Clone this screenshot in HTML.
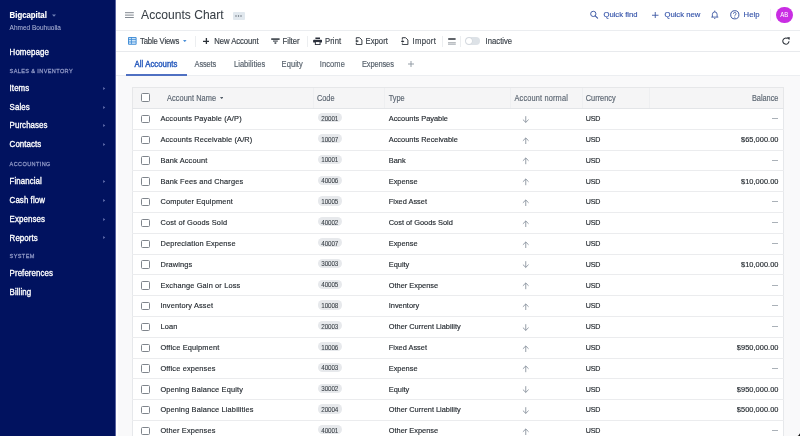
<!DOCTYPE html>
<html><head><meta charset="utf-8"><style>
html,body{margin:0;padding:0;width:800px;height:436px;overflow:hidden;background:#f9f9fa}
svg{display:block}
#tx{position:absolute;left:0;top:0;will-change:transform}
#tx text{font-family:'Liberation Sans', sans-serif}
</style></head><body>
<div style="position:absolute;left:0.00px;top:0.00px;width:115.00px;height:436.00px;background:#01125f"></div>
<div style="position:absolute;left:115.00px;top:0.00px;width:1.00px;height:436.00px;background:#5a64a0"></div>
<svg style="position:absolute;left:51.50px;top:13.50px" width="4" height="3" viewBox="0 0 4 3"><path d="M0 0.5h4L2 2.8z" fill="#6f7fb5"/></svg>
<svg style="position:absolute;left:101.50px;top:85.80px" width="4" height="5" viewBox="0 0 4 5"><path d="M1.2 1L3.2 2.5L1.2 4z" fill="#6673b0"/></svg>
<svg style="position:absolute;left:101.50px;top:104.60px" width="4" height="5" viewBox="0 0 4 5"><path d="M1.2 1L3.2 2.5L1.2 4z" fill="#6673b0"/></svg>
<svg style="position:absolute;left:101.50px;top:123.00px" width="4" height="5" viewBox="0 0 4 5"><path d="M1.2 1L3.2 2.5L1.2 4z" fill="#6673b0"/></svg>
<svg style="position:absolute;left:101.50px;top:141.50px" width="4" height="5" viewBox="0 0 4 5"><path d="M1.2 1L3.2 2.5L1.2 4z" fill="#6673b0"/></svg>
<svg style="position:absolute;left:101.50px;top:179.20px" width="4" height="5" viewBox="0 0 4 5"><path d="M1.2 1L3.2 2.5L1.2 4z" fill="#6673b0"/></svg>
<svg style="position:absolute;left:101.50px;top:197.80px" width="4" height="5" viewBox="0 0 4 5"><path d="M1.2 1L3.2 2.5L1.2 4z" fill="#6673b0"/></svg>
<svg style="position:absolute;left:101.50px;top:216.50px" width="4" height="5" viewBox="0 0 4 5"><path d="M1.2 1L3.2 2.5L1.2 4z" fill="#6673b0"/></svg>
<svg style="position:absolute;left:101.50px;top:235.30px" width="4" height="5" viewBox="0 0 4 5"><path d="M1.2 1L3.2 2.5L1.2 4z" fill="#6673b0"/></svg>
<div style="position:absolute;left:116.00px;top:0.00px;width:684.00px;height:436.00px;background:#f9f9fa"></div>
<div style="position:absolute;left:116.00px;top:0.00px;width:2.00px;height:436.00px;background:#fff"></div>
<div style="position:absolute;left:116.00px;top:0.00px;width:684.60px;height:29.80px;background:#fff"></div>
<div style="position:absolute;left:116.00px;top:29.80px;width:684.60px;height:1.00px;background:#ebedf0"></div>
<svg style="position:absolute;left:125.00px;top:12.00px" width="9" height="7" viewBox="0 0 9 7"><path d="M0 0.7h8.8M0 3.1h8.8M0 5.5h8.8" stroke="#6a727c" stroke-width="0.85"/></svg>
<div style="position:absolute;left:232.60px;top:11.60px;width:12.30px;height:8.40px;background:#e1e8ee;border-radius:1px"></div>
<svg style="position:absolute;left:235.40px;top:15.00px" width="7" height="2" viewBox="0 0 7 2"><circle cx="1" cy="1" r="0.7" fill="#56606b"/><circle cx="3.5" cy="1" r="0.7" fill="#56606b"/><circle cx="6" cy="1" r="0.7" fill="#56606b"/></svg>
<svg style="position:absolute;left:589.00px;top:10.00px" width="10" height="10" viewBox="0 0 10 10"><circle cx="4.3" cy="3.9" r="2.65" stroke="#3d58a3" stroke-width="0.95" fill="none"/><path d="M6.2 5.8L8.6 8.2" stroke="#3d58a3" stroke-width="1.1" stroke-linecap="round"/></svg>
<svg style="position:absolute;left:652.00px;top:11.60px" width="6.5" height="6.5" viewBox="0 0 6.5 6.5"><path d="M3.25 0v6.5M0 3.25h6.5" stroke="#3d58a3" stroke-width="0.9"/></svg>
<svg style="position:absolute;left:711.00px;top:10.20px" width="7.6" height="9.5" viewBox="0 0 7.6 9.5"><path d="M0.3 7.1h7M1.4 7.1V4.3a2.35 2.35 0 0 1 4.7 0V7.1M3.75 1.9V0.6M3.2 8.5h1.1" stroke="#3d58a3" stroke-width="0.9" fill="none"/></svg>
<svg style="position:absolute;left:730.00px;top:10.30px" width="9.6" height="9.6" viewBox="0 0 9.6 9.6"><circle cx="4.8" cy="4.8" r="4.1" stroke="#3d58a3" stroke-width="1" fill="none"/><path d="M3.5 3.7a1.3 1.3 0 1 1 1.8 1.2c-.4.2-.5.5-.5.9" stroke="#3d58a3" stroke-width="0.9" fill="none"/><circle cx="4.8" cy="7.1" r="0.55" fill="#3d58a3"/></svg>
<div style="position:absolute;left:769.50px;top:9.00px;width:0.50px;height:12.00px;background:#f2f3f5"></div>
<div style="position:absolute;left:776.00px;top:6.80px;width:16.60px;height:16.40px;background:#c92de3;border-radius:50%"></div>
<div style="position:absolute;left:116.00px;top:30.80px;width:684.60px;height:20.20px;background:#fff"></div>
<div style="position:absolute;left:116.00px;top:51.00px;width:684.00px;height:1.20px;background:#e8eaed"></div>
<svg style="position:absolute;left:128.00px;top:37.00px" width="8.6" height="7.75" viewBox="0 0 8.6 7.75"><rect x="0" y="0" width="8.6" height="7.75" rx="0.9" fill="#3c8ad5"/><rect x="0.9" y="0.9" width="2.05" height="1.05" fill="#cfe6fa"/><rect x="3.75" y="0.9" width="3.90" height="1.05" fill="#cfe6fa"/><rect x="0.9" y="2.75" width="2.05" height="1.80" fill="#cfe6fa"/><rect x="3.75" y="2.75" width="3.90" height="1.80" fill="#cfe6fa"/><rect x="0.9" y="5.35" width="2.05" height="1.50" fill="#cfe6fa"/><rect x="3.75" y="5.35" width="3.90" height="1.50" fill="#cfe6fa"/></svg>
<svg style="position:absolute;left:183.00px;top:40.00px" width="3.6" height="2.2" viewBox="0 0 3.6 2.2"><path d="M0 0h3.6L1.8 2.2z" fill="#4a8fd8"/></svg>
<div style="position:absolute;left:195.20px;top:35.50px;width:0.60px;height:11.50px;background:#eceef0"></div>
<svg style="position:absolute;left:202.70px;top:37.60px" width="6.8" height="6.6" viewBox="0 0 6.8 6.6"><path d="M3.4 0v6.6M0 3.3h6.8" stroke="#2b3138" stroke-width="1.3"/></svg>
<svg style="position:absolute;left:271.00px;top:37.70px" width="9" height="6.5" viewBox="0 0 9 6.5"><path d="M0.2 0.3H8.6V1.9H0.2z" fill="#394047"/><path d="M2 2.5H6.8V3.7H2z" fill="#4a5158"/><path d="M3.5 4.2H5.3V5.9H3.5z" fill="#4a5158"/></svg>
<div style="position:absolute;left:306.50px;top:35.50px;width:0.60px;height:11.50px;background:#eceef0"></div>
<svg style="position:absolute;left:313.00px;top:37.00px" width="9.2" height="8.2" viewBox="0 0 9.2 8.2"><rect x="2.4" y="0.5" width="4.6" height="1.5" fill="#2a2f3a"/><rect x="0.1" y="2.7" width="9" height="2.9" rx="0.9" fill="#2a2f3a"/><rect x="2.35" y="4.6" width="4.7" height="3" fill="#fff" stroke="#2a2f3a" stroke-width="0.95"/></svg>
<svg style="position:absolute;left:354.80px;top:36.80px" width="8" height="8.2" viewBox="0 0 8 8.2"><path d="M1.3 2.6V0.7H4.6L6.9 3V7.6H1.3V5.7" stroke="#2b3138" stroke-width="0.95" fill="none" stroke-linejoin="round"/><path d="M0.2 4.1L2.2 2.7V3.5H3.4V4.8H2.2V5.6z" fill="#2b3138"/></svg>
<svg style="position:absolute;left:401.40px;top:36.80px" width="8" height="8.2" viewBox="0 0 8 8.2"><path d="M1.3 2.6V0.7H4.6L6.9 3V7.6H1.3V6.4" stroke="#2b3138" stroke-width="0.95" fill="none" stroke-linejoin="round"/><path d="M3.4 4.4L1.4 5.8V5H0.2V3.7H1.4V2.9z" fill="#2b3138"/></svg>
<div style="position:absolute;left:442.30px;top:35.50px;width:0.60px;height:11.50px;background:#eceef0"></div>
<svg style="position:absolute;left:448.00px;top:37.50px" width="7.8" height="7.5" viewBox="0 0 7.8 7.5"><path d="M0.2 1h7.4" stroke="#2b3138" stroke-width="1.5"/><path d="M0 4.9h7.8" stroke="#707880" stroke-width="0.8"/><path d="M0 6.6h7.8" stroke="#9aa1a8" stroke-width="0.7"/></svg>
<div style="position:absolute;left:459.80px;top:35.50px;width:0.60px;height:11.50px;background:#eceef0"></div>
<div style="position:absolute;left:465.30px;top:37.20px;width:14.80px;height:7.40px;background:#dde2e7;border-radius:4px"></div>
<div style="position:absolute;left:465.90px;top:37.80px;width:6.20px;height:6.20px;background:#fff;border-radius:50%;box-shadow:0 0 0 0.4px #c9ced4"></div>
<svg style="position:absolute;left:781.50px;top:37.00px" width="8" height="8" viewBox="0 0 8 8"><path d="M7.0 4.3A3.1 3.1 0 1 1 5.6 1.5" stroke="#2b3138" stroke-width="1.05" fill="none"/><path d="M4.9 0.2L7.9 0.3L7.3 3.2z" fill="#2b3138"/></svg>
<div style="position:absolute;left:116.00px;top:52.20px;width:684.00px;height:23.60px;background:#fff"></div>
<div style="position:absolute;left:116.00px;top:75.40px;width:684.00px;height:1.00px;background:#eceef1"></div>
<div style="position:absolute;left:126.00px;top:74.00px;width:60.60px;height:1.80px;background:#4f70c2"></div>
<svg style="position:absolute;left:408.40px;top:61.10px" width="6" height="6" viewBox="0 0 6 6"><path d="M3 0v6M0 3h6" stroke="#8a949e" stroke-width="0.9"/></svg>
<div style="position:absolute;left:132.20px;top:87.00px;width:651.40px;height:349.00px;background:#fff;border-left:0.8px solid #e6e8eb;border-right:0.8px solid #e6e8eb;box-sizing:border-box"></div>
<div style="position:absolute;left:132.20px;top:87.00px;width:651.40px;height:21.50px;background:#f5f5f6;border:0.8px solid #e6e7e9;box-sizing:border-box"></div>
<div style="position:absolute;left:312.50px;top:87.50px;width:0.80px;height:21.00px;background:#eeeff1"></div>
<div style="position:absolute;left:383.80px;top:87.50px;width:0.80px;height:21.00px;background:#eeeff1"></div>
<div style="position:absolute;left:510.00px;top:87.50px;width:0.80px;height:21.00px;background:#eeeff1"></div>
<div style="position:absolute;left:582.00px;top:87.50px;width:0.80px;height:21.00px;background:#eeeff1"></div>
<div style="position:absolute;left:648.60px;top:87.50px;width:0.80px;height:21.00px;background:#eeeff1"></div>
<div style="position:absolute;left:132.20px;top:108.20px;width:651.40px;height:0.90px;background:#e3e5e8"></div>
<div style="position:absolute;left:141.10px;top:93.10px;width:8.60px;height:8.60px;border:0.9px solid #7f858c;border-radius:1.5px;background:#fff;box-sizing:border-box"></div>
<svg style="position:absolute;left:220.00px;top:96.80px" width="3.4" height="2.4" viewBox="0 0 3.4 2.4"><path d="M0 0h3.4L1.7 2.2z" fill="#56606b"/></svg>
<div style="position:absolute;left:132.20px;top:128.85px;width:651.40px;height:0.90px;background:#ebecee"></div>
<div style="position:absolute;left:141.10px;top:114.70px;width:8.60px;height:8.60px;border:0.9px solid #7f858c;border-radius:1.5px;background:#fff;box-sizing:border-box"></div>
<div style="position:absolute;left:318.00px;top:113.20px;width:24.00px;height:9.20px;background:#e7e9ec;border-radius:4.6px"></div>
<svg style="position:absolute;left:522.00px;top:115.70px" width="7.5" height="7.5" viewBox="0 0 7.5 7.5"><path d="M3.75 0.2V6.4M0.9 3.6L3.75 6.4L6.6 3.6" stroke="#7c8793" stroke-width="0.8" fill="none"/></svg>
<div style="position:absolute;left:771.60px;top:118.10px;width:6.80px;height:0.80px;background:#aab1b8"></div>
<div style="position:absolute;left:132.20px;top:149.65px;width:651.40px;height:0.90px;background:#ebecee"></div>
<div style="position:absolute;left:141.10px;top:135.50px;width:8.60px;height:8.60px;border:0.9px solid #7f858c;border-radius:1.5px;background:#fff;box-sizing:border-box"></div>
<div style="position:absolute;left:318.00px;top:134.00px;width:24.00px;height:9.20px;background:#e7e9ec;border-radius:4.6px"></div>
<svg style="position:absolute;left:522.00px;top:136.50px" width="7.5" height="7.5" viewBox="0 0 7.5 7.5"><path d="M3.75 7.2V1M0.9 3.8L3.75 1L6.6 3.8" stroke="#7c8793" stroke-width="0.8" fill="none"/></svg>
<div style="position:absolute;left:132.20px;top:170.45px;width:651.40px;height:0.90px;background:#ebecee"></div>
<div style="position:absolute;left:141.10px;top:156.30px;width:8.60px;height:8.60px;border:0.9px solid #7f858c;border-radius:1.5px;background:#fff;box-sizing:border-box"></div>
<div style="position:absolute;left:318.00px;top:154.80px;width:24.00px;height:9.20px;background:#e7e9ec;border-radius:4.6px"></div>
<svg style="position:absolute;left:522.00px;top:157.30px" width="7.5" height="7.5" viewBox="0 0 7.5 7.5"><path d="M3.75 7.2V1M0.9 3.8L3.75 1L6.6 3.8" stroke="#7c8793" stroke-width="0.8" fill="none"/></svg>
<div style="position:absolute;left:771.60px;top:159.70px;width:6.80px;height:0.80px;background:#aab1b8"></div>
<div style="position:absolute;left:132.20px;top:191.25px;width:651.40px;height:0.90px;background:#ebecee"></div>
<div style="position:absolute;left:141.10px;top:177.10px;width:8.60px;height:8.60px;border:0.9px solid #7f858c;border-radius:1.5px;background:#fff;box-sizing:border-box"></div>
<div style="position:absolute;left:318.00px;top:175.60px;width:24.00px;height:9.20px;background:#e7e9ec;border-radius:4.6px"></div>
<svg style="position:absolute;left:522.00px;top:178.10px" width="7.5" height="7.5" viewBox="0 0 7.5 7.5"><path d="M3.75 7.2V1M0.9 3.8L3.75 1L6.6 3.8" stroke="#7c8793" stroke-width="0.8" fill="none"/></svg>
<div style="position:absolute;left:132.20px;top:212.05px;width:651.40px;height:0.90px;background:#ebecee"></div>
<div style="position:absolute;left:141.10px;top:197.90px;width:8.60px;height:8.60px;border:0.9px solid #7f858c;border-radius:1.5px;background:#fff;box-sizing:border-box"></div>
<div style="position:absolute;left:318.00px;top:196.40px;width:24.00px;height:9.20px;background:#e7e9ec;border-radius:4.6px"></div>
<svg style="position:absolute;left:522.00px;top:198.90px" width="7.5" height="7.5" viewBox="0 0 7.5 7.5"><path d="M3.75 7.2V1M0.9 3.8L3.75 1L6.6 3.8" stroke="#7c8793" stroke-width="0.8" fill="none"/></svg>
<div style="position:absolute;left:771.60px;top:201.30px;width:6.80px;height:0.80px;background:#aab1b8"></div>
<div style="position:absolute;left:132.20px;top:232.85px;width:651.40px;height:0.90px;background:#ebecee"></div>
<div style="position:absolute;left:141.10px;top:218.70px;width:8.60px;height:8.60px;border:0.9px solid #7f858c;border-radius:1.5px;background:#fff;box-sizing:border-box"></div>
<div style="position:absolute;left:318.00px;top:217.20px;width:24.00px;height:9.20px;background:#e7e9ec;border-radius:4.6px"></div>
<svg style="position:absolute;left:522.00px;top:219.70px" width="7.5" height="7.5" viewBox="0 0 7.5 7.5"><path d="M3.75 7.2V1M0.9 3.8L3.75 1L6.6 3.8" stroke="#7c8793" stroke-width="0.8" fill="none"/></svg>
<div style="position:absolute;left:771.60px;top:222.10px;width:6.80px;height:0.80px;background:#aab1b8"></div>
<div style="position:absolute;left:132.20px;top:253.65px;width:651.40px;height:0.90px;background:#ebecee"></div>
<div style="position:absolute;left:141.10px;top:239.50px;width:8.60px;height:8.60px;border:0.9px solid #7f858c;border-radius:1.5px;background:#fff;box-sizing:border-box"></div>
<div style="position:absolute;left:318.00px;top:238.00px;width:24.00px;height:9.20px;background:#e7e9ec;border-radius:4.6px"></div>
<svg style="position:absolute;left:522.00px;top:240.50px" width="7.5" height="7.5" viewBox="0 0 7.5 7.5"><path d="M3.75 7.2V1M0.9 3.8L3.75 1L6.6 3.8" stroke="#7c8793" stroke-width="0.8" fill="none"/></svg>
<div style="position:absolute;left:771.60px;top:242.90px;width:6.80px;height:0.80px;background:#aab1b8"></div>
<div style="position:absolute;left:132.20px;top:274.45px;width:651.40px;height:0.90px;background:#ebecee"></div>
<div style="position:absolute;left:141.10px;top:260.30px;width:8.60px;height:8.60px;border:0.9px solid #7f858c;border-radius:1.5px;background:#fff;box-sizing:border-box"></div>
<div style="position:absolute;left:318.00px;top:258.80px;width:24.00px;height:9.20px;background:#e7e9ec;border-radius:4.6px"></div>
<svg style="position:absolute;left:522.00px;top:261.30px" width="7.5" height="7.5" viewBox="0 0 7.5 7.5"><path d="M3.75 0.2V6.4M0.9 3.6L3.75 6.4L6.6 3.6" stroke="#7c8793" stroke-width="0.8" fill="none"/></svg>
<div style="position:absolute;left:132.20px;top:295.25px;width:651.40px;height:0.90px;background:#ebecee"></div>
<div style="position:absolute;left:141.10px;top:281.10px;width:8.60px;height:8.60px;border:0.9px solid #7f858c;border-radius:1.5px;background:#fff;box-sizing:border-box"></div>
<div style="position:absolute;left:318.00px;top:279.60px;width:24.00px;height:9.20px;background:#e7e9ec;border-radius:4.6px"></div>
<svg style="position:absolute;left:522.00px;top:282.10px" width="7.5" height="7.5" viewBox="0 0 7.5 7.5"><path d="M3.75 7.2V1M0.9 3.8L3.75 1L6.6 3.8" stroke="#7c8793" stroke-width="0.8" fill="none"/></svg>
<div style="position:absolute;left:771.60px;top:284.50px;width:6.80px;height:0.80px;background:#aab1b8"></div>
<div style="position:absolute;left:132.20px;top:316.05px;width:651.40px;height:0.90px;background:#ebecee"></div>
<div style="position:absolute;left:141.10px;top:301.90px;width:8.60px;height:8.60px;border:0.9px solid #7f858c;border-radius:1.5px;background:#fff;box-sizing:border-box"></div>
<div style="position:absolute;left:318.00px;top:300.40px;width:24.00px;height:9.20px;background:#e7e9ec;border-radius:4.6px"></div>
<svg style="position:absolute;left:522.00px;top:302.90px" width="7.5" height="7.5" viewBox="0 0 7.5 7.5"><path d="M3.75 7.2V1M0.9 3.8L3.75 1L6.6 3.8" stroke="#7c8793" stroke-width="0.8" fill="none"/></svg>
<div style="position:absolute;left:771.60px;top:305.30px;width:6.80px;height:0.80px;background:#aab1b8"></div>
<div style="position:absolute;left:132.20px;top:336.85px;width:651.40px;height:0.90px;background:#ebecee"></div>
<div style="position:absolute;left:141.10px;top:322.70px;width:8.60px;height:8.60px;border:0.9px solid #7f858c;border-radius:1.5px;background:#fff;box-sizing:border-box"></div>
<div style="position:absolute;left:318.00px;top:321.20px;width:24.00px;height:9.20px;background:#e7e9ec;border-radius:4.6px"></div>
<svg style="position:absolute;left:522.00px;top:323.70px" width="7.5" height="7.5" viewBox="0 0 7.5 7.5"><path d="M3.75 0.2V6.4M0.9 3.6L3.75 6.4L6.6 3.6" stroke="#7c8793" stroke-width="0.8" fill="none"/></svg>
<div style="position:absolute;left:771.60px;top:326.10px;width:6.80px;height:0.80px;background:#aab1b8"></div>
<div style="position:absolute;left:132.20px;top:357.65px;width:651.40px;height:0.90px;background:#ebecee"></div>
<div style="position:absolute;left:141.10px;top:343.50px;width:8.60px;height:8.60px;border:0.9px solid #7f858c;border-radius:1.5px;background:#fff;box-sizing:border-box"></div>
<div style="position:absolute;left:318.00px;top:342.00px;width:24.00px;height:9.20px;background:#e7e9ec;border-radius:4.6px"></div>
<svg style="position:absolute;left:522.00px;top:344.50px" width="7.5" height="7.5" viewBox="0 0 7.5 7.5"><path d="M3.75 7.2V1M0.9 3.8L3.75 1L6.6 3.8" stroke="#7c8793" stroke-width="0.8" fill="none"/></svg>
<div style="position:absolute;left:132.20px;top:378.45px;width:651.40px;height:0.90px;background:#ebecee"></div>
<div style="position:absolute;left:141.10px;top:364.30px;width:8.60px;height:8.60px;border:0.9px solid #7f858c;border-radius:1.5px;background:#fff;box-sizing:border-box"></div>
<div style="position:absolute;left:318.00px;top:362.80px;width:24.00px;height:9.20px;background:#e7e9ec;border-radius:4.6px"></div>
<svg style="position:absolute;left:522.00px;top:365.30px" width="7.5" height="7.5" viewBox="0 0 7.5 7.5"><path d="M3.75 7.2V1M0.9 3.8L3.75 1L6.6 3.8" stroke="#7c8793" stroke-width="0.8" fill="none"/></svg>
<div style="position:absolute;left:771.60px;top:367.70px;width:6.80px;height:0.80px;background:#aab1b8"></div>
<div style="position:absolute;left:132.20px;top:399.25px;width:651.40px;height:0.90px;background:#ebecee"></div>
<div style="position:absolute;left:141.10px;top:385.10px;width:8.60px;height:8.60px;border:0.9px solid #7f858c;border-radius:1.5px;background:#fff;box-sizing:border-box"></div>
<div style="position:absolute;left:318.00px;top:383.60px;width:24.00px;height:9.20px;background:#e7e9ec;border-radius:4.6px"></div>
<svg style="position:absolute;left:522.00px;top:386.10px" width="7.5" height="7.5" viewBox="0 0 7.5 7.5"><path d="M3.75 0.2V6.4M0.9 3.6L3.75 6.4L6.6 3.6" stroke="#7c8793" stroke-width="0.8" fill="none"/></svg>
<div style="position:absolute;left:132.20px;top:420.05px;width:651.40px;height:0.90px;background:#ebecee"></div>
<div style="position:absolute;left:141.10px;top:405.90px;width:8.60px;height:8.60px;border:0.9px solid #7f858c;border-radius:1.5px;background:#fff;box-sizing:border-box"></div>
<div style="position:absolute;left:318.00px;top:404.40px;width:24.00px;height:9.20px;background:#e7e9ec;border-radius:4.6px"></div>
<svg style="position:absolute;left:522.00px;top:406.90px" width="7.5" height="7.5" viewBox="0 0 7.5 7.5"><path d="M3.75 0.2V6.4M0.9 3.6L3.75 6.4L6.6 3.6" stroke="#7c8793" stroke-width="0.8" fill="none"/></svg>
<div style="position:absolute;left:141.10px;top:426.70px;width:8.60px;height:8.60px;border:0.9px solid #7f858c;border-radius:1.5px;background:#fff;box-sizing:border-box"></div>
<div style="position:absolute;left:318.00px;top:425.20px;width:24.00px;height:9.20px;background:#e7e9ec;border-radius:4.6px"></div>
<svg style="position:absolute;left:522.00px;top:427.70px" width="7.5" height="7.5" viewBox="0 0 7.5 7.5"><path d="M3.75 7.2V1M0.9 3.8L3.75 1L6.6 3.8" stroke="#7c8793" stroke-width="0.8" fill="none"/></svg>
<div style="position:absolute;left:771.60px;top:430.10px;width:6.80px;height:0.80px;background:#aab1b8"></div>
<svg style="position:absolute;left:794.50px;top:430.50px" width="5.5" height="5.5" viewBox="0 0 5.5 5.5"><path d="M5.5 0V5.5H0A5.5 5.5 0 0 0 5.5 0z" fill="#111"/></svg>
<svg id="tx" width="800" height="436" viewBox="0 0 800 436">
<text transform="translate(9.60 17.90) scale(1 1.1)" font-size="7.80" fill="#fff" stroke="#fff" stroke-width="0.15" font-weight="700" style="">Bigcapital</text>
<text transform="translate(9.60 29.60) scale(1 1.1)" font-size="6.50" fill="#aeb6d8" stroke="#aeb6d8" stroke-width="0.05" font-weight="400" style="">Ahmed Bouhuolia</text>
<text transform="translate(9.60 54.60) scale(1 1.1)" font-size="7.90" fill="#ffffff" stroke="#ffffff" stroke-width="0.3" font-weight="400" style="letter-spacing:0.08px;">Homepage</text>
<text transform="translate(9.60 72.80) scale(1 1.1)" font-size="5.60" fill="#8c95c4" stroke="#8c95c4" stroke-width="0.25" font-weight="400" style="letter-spacing:0.36px;">SALES &amp; INVENTORY</text>
<text transform="translate(9.60 91.00) scale(1 1.1)" font-size="7.90" fill="#ffffff" stroke="#ffffff" stroke-width="0.3" font-weight="400" style="letter-spacing:0.08px;">Items</text>
<text transform="translate(9.60 109.80) scale(1 1.1)" font-size="7.90" fill="#ffffff" stroke="#ffffff" stroke-width="0.3" font-weight="400" style="letter-spacing:0.08px;">Sales</text>
<text transform="translate(9.60 128.20) scale(1 1.1)" font-size="7.90" fill="#ffffff" stroke="#ffffff" stroke-width="0.3" font-weight="400" style="letter-spacing:0.08px;">Purchases</text>
<text transform="translate(9.60 146.70) scale(1 1.1)" font-size="7.90" fill="#ffffff" stroke="#ffffff" stroke-width="0.3" font-weight="400" style="letter-spacing:0.08px;">Contacts</text>
<text transform="translate(9.60 165.50) scale(1 1.1)" font-size="5.60" fill="#8c95c4" stroke="#8c95c4" stroke-width="0.25" font-weight="400" style="letter-spacing:0.36px;">ACCOUNTING</text>
<text transform="translate(9.60 184.40) scale(1 1.1)" font-size="7.90" fill="#ffffff" stroke="#ffffff" stroke-width="0.3" font-weight="400" style="letter-spacing:0.08px;">Financial</text>
<text transform="translate(9.60 203.00) scale(1 1.1)" font-size="7.90" fill="#ffffff" stroke="#ffffff" stroke-width="0.3" font-weight="400" style="letter-spacing:0.08px;">Cash flow</text>
<text transform="translate(9.60 221.70) scale(1 1.1)" font-size="7.90" fill="#ffffff" stroke="#ffffff" stroke-width="0.3" font-weight="400" style="letter-spacing:0.08px;">Expenses</text>
<text transform="translate(9.60 240.50) scale(1 1.1)" font-size="7.90" fill="#ffffff" stroke="#ffffff" stroke-width="0.3" font-weight="400" style="letter-spacing:0.08px;">Reports</text>
<text transform="translate(9.60 258.30) scale(1 1.1)" font-size="5.60" fill="#8c95c4" stroke="#8c95c4" stroke-width="0.25" font-weight="400" style="letter-spacing:0.36px;">SYSTEM</text>
<text transform="translate(9.60 276.30) scale(1 1.1)" font-size="7.90" fill="#ffffff" stroke="#ffffff" stroke-width="0.3" font-weight="400" style="letter-spacing:0.08px;">Preferences</text>
<text transform="translate(9.60 295.00) scale(1 1.1)" font-size="7.90" fill="#ffffff" stroke="#ffffff" stroke-width="0.3" font-weight="400" style="letter-spacing:0.08px;">Billing</text>
<text transform="translate(141.10 19.20) scale(1 1.1)" font-size="12.10" fill="#394047" stroke="#394047" stroke-width="0.05" font-weight="400" style="">Accounts Chart</text>
<text transform="translate(603.40 17.20) scale(1 1.0)" font-size="7.70" fill="#3554aa" stroke="#3554aa" stroke-width="0.15" font-weight="400" style="">Quick find</text>
<text transform="translate(664.40 17.20) scale(1 1.0)" font-size="7.70" fill="#3554aa" stroke="#3554aa" stroke-width="0.15" font-weight="400" style="">Quick new</text>
<text transform="translate(743.60 17.20) scale(1 1.0)" font-size="7.70" fill="#3554aa" stroke="#3554aa" stroke-width="0.15" font-weight="400" style="">Help</text>
<text transform="translate(780.30 17.00) scale(1 1.1)" font-size="6.00" fill="#fff" font-weight="400" style="">AB</text>
<text transform="translate(140.00 43.60) scale(1 1.1)" font-size="7.70" fill="#3a4149" stroke="#3a4149" stroke-width="0.15" font-weight="400" style="letter-spacing:-0.15px;">Table Views</text>
<text transform="translate(214.25 43.60) scale(1 1.1)" font-size="7.70" fill="#3a4149" stroke="#3a4149" stroke-width="0.15" font-weight="400" style="letter-spacing:-0.04px;">New Account</text>
<text transform="translate(282.50 43.60) scale(1 1.1)" font-size="7.70" fill="#3a4149" stroke="#3a4149" stroke-width="0.15" font-weight="400" style="">Filter</text>
<text transform="translate(325.00 43.60) scale(1 1.1)" font-size="7.70" fill="#3a4149" stroke="#3a4149" stroke-width="0.15" font-weight="400" style="letter-spacing:0.09px;">Print</text>
<text transform="translate(365.50 43.60) scale(1 1.1)" font-size="7.70" fill="#3a4149" stroke="#3a4149" stroke-width="0.15" font-weight="400" style="letter-spacing:0.04px;">Export</text>
<text transform="translate(412.50 43.60) scale(1 1.1)" font-size="7.70" fill="#3a4149" stroke="#3a4149" stroke-width="0.15" font-weight="400" style="letter-spacing:0.3px;">Import</text>
<text transform="translate(485.60 44.00) scale(1 1.1)" font-size="7.70" fill="#3a4149" stroke="#3a4149" stroke-width="0.15" font-weight="400" style="">Inactive</text>
<text transform="translate(134.60 67.20) scale(1 1.1)" font-size="7.70" fill="#2e5fbf" stroke="#2e5fbf" stroke-width="0.42" font-weight="400" style="letter-spacing:0.08px;">All Accounts</text>
<text transform="translate(194.60 67.20) scale(1 1.1)" font-size="7.50" fill="#56606b" stroke="#56606b" stroke-width="0.15" font-weight="400" style="letter-spacing:-0.18px;">Assets</text>
<text transform="translate(234.00 67.20) scale(1 1.1)" font-size="7.50" fill="#56606b" stroke="#56606b" stroke-width="0.15" font-weight="400" style="letter-spacing:0.04px;">Liabilities</text>
<text transform="translate(281.60 67.20) scale(1 1.1)" font-size="7.50" fill="#56606b" stroke="#56606b" stroke-width="0.15" font-weight="400" style="letter-spacing:0.07px;">Equity</text>
<text transform="translate(319.70 67.20) scale(1 1.1)" font-size="7.50" fill="#56606b" stroke="#56606b" stroke-width="0.15" font-weight="400" style="letter-spacing:0.12px;">Income</text>
<text transform="translate(361.90 67.20) scale(1 1.1)" font-size="7.50" fill="#56606b" stroke="#56606b" stroke-width="0.15" font-weight="400" style="letter-spacing:-0.13px;">Expenses</text>
<text transform="translate(167.00 100.90) scale(1 1.1)" font-size="7.40" fill="#5d6773" stroke="#5d6773" stroke-width="0.15" font-weight="400" style="letter-spacing:0.06px;">Account Name</text>
<text transform="translate(317.00 100.90) scale(1 1.1)" font-size="7.40" fill="#5d6773" stroke="#5d6773" stroke-width="0.15" font-weight="400" style="letter-spacing:-0.05px;">Code</text>
<text transform="translate(388.75 100.90) scale(1 1.1)" font-size="7.40" fill="#5d6773" stroke="#5d6773" stroke-width="0.15" font-weight="400" style="letter-spacing:-0.07px;">Type</text>
<text transform="translate(514.50 100.90) scale(1 1.1)" font-size="7.40" fill="#5d6773" stroke="#5d6773" stroke-width="0.15" font-weight="400" style="letter-spacing:0.15px;">Account normal</text>
<text transform="translate(585.75 100.90) scale(1 1.1)" font-size="7.40" fill="#5d6773" stroke="#5d6773" stroke-width="0.15" font-weight="400" style="">Currency</text>
<text transform="translate(778.40 100.90) scale(1 1.1)" font-size="7.40" fill="#5d6773" stroke="#5d6773" stroke-width="0.15" font-weight="400" text-anchor="end" style="letter-spacing:-0.04px;">Balance</text>
<text transform="translate(160.40 121.10) scale(1 1.0)" font-size="7.40" fill="#1f252b" stroke="#1f252b" stroke-width="0.15" font-weight="400" style="letter-spacing:0.15px;">Accounts Payable (A/P)</text>
<text transform="translate(321.30 120.80) scale(1 1.1)" font-size="6.30" fill="#3a4047" stroke="#3a4047" stroke-width="0.06" font-weight="400" style="letter-spacing:-0.12px;">20001</text>
<text transform="translate(388.75 121.10) scale(1 1.0)" font-size="7.40" fill="#1f252b" stroke="#1f252b" stroke-width="0.15" font-weight="400" style="">Accounts Payable</text>
<text transform="translate(585.75 121.10) scale(1 1.0)" font-size="7.10" fill="#1f252b" stroke="#1f252b" stroke-width="0.15" font-weight="400" style="letter-spacing:-0.15px;">USD</text>
<text transform="translate(160.40 141.90) scale(1 1.0)" font-size="7.40" fill="#1f252b" stroke="#1f252b" stroke-width="0.15" font-weight="400" style="letter-spacing:0.15px;">Accounts Receivable (A/R)</text>
<text transform="translate(321.30 141.60) scale(1 1.1)" font-size="6.30" fill="#3a4047" stroke="#3a4047" stroke-width="0.06" font-weight="400" style="letter-spacing:-0.12px;">10007</text>
<text transform="translate(388.75 141.90) scale(1 1.0)" font-size="7.40" fill="#1f252b" stroke="#1f252b" stroke-width="0.15" font-weight="400" style="">Accounts Receivable</text>
<text transform="translate(585.75 141.90) scale(1 1.0)" font-size="7.10" fill="#1f252b" stroke="#1f252b" stroke-width="0.15" font-weight="400" style="letter-spacing:-0.15px;">USD</text>
<text transform="translate(778.50 141.90) scale(1 1.0)" font-size="7.40" fill="#1f252b" stroke="#1f252b" stroke-width="0.15" font-weight="400" text-anchor="end" style="letter-spacing:0.05px;">$65,000.00</text>
<text transform="translate(160.40 162.70) scale(1 1.0)" font-size="7.40" fill="#1f252b" stroke="#1f252b" stroke-width="0.15" font-weight="400" style="letter-spacing:0.15px;">Bank Account</text>
<text transform="translate(321.30 162.40) scale(1 1.1)" font-size="6.30" fill="#3a4047" stroke="#3a4047" stroke-width="0.06" font-weight="400" style="letter-spacing:-0.12px;">10001</text>
<text transform="translate(388.75 162.70) scale(1 1.0)" font-size="7.40" fill="#1f252b" stroke="#1f252b" stroke-width="0.15" font-weight="400" style="">Bank</text>
<text transform="translate(585.75 162.70) scale(1 1.0)" font-size="7.10" fill="#1f252b" stroke="#1f252b" stroke-width="0.15" font-weight="400" style="letter-spacing:-0.15px;">USD</text>
<text transform="translate(160.40 183.50) scale(1 1.0)" font-size="7.40" fill="#1f252b" stroke="#1f252b" stroke-width="0.15" font-weight="400" style="letter-spacing:0.15px;">Bank Fees and Charges</text>
<text transform="translate(321.30 183.20) scale(1 1.1)" font-size="6.30" fill="#3a4047" stroke="#3a4047" stroke-width="0.06" font-weight="400" style="letter-spacing:-0.12px;">40006</text>
<text transform="translate(388.75 183.50) scale(1 1.0)" font-size="7.40" fill="#1f252b" stroke="#1f252b" stroke-width="0.15" font-weight="400" style="">Expense</text>
<text transform="translate(585.75 183.50) scale(1 1.0)" font-size="7.10" fill="#1f252b" stroke="#1f252b" stroke-width="0.15" font-weight="400" style="letter-spacing:-0.15px;">USD</text>
<text transform="translate(778.50 183.50) scale(1 1.0)" font-size="7.40" fill="#1f252b" stroke="#1f252b" stroke-width="0.15" font-weight="400" text-anchor="end" style="letter-spacing:0.05px;">$10,000.00</text>
<text transform="translate(160.40 204.30) scale(1 1.0)" font-size="7.40" fill="#1f252b" stroke="#1f252b" stroke-width="0.15" font-weight="400" style="letter-spacing:0.15px;">Computer Equipment</text>
<text transform="translate(321.30 204.00) scale(1 1.1)" font-size="6.30" fill="#3a4047" stroke="#3a4047" stroke-width="0.06" font-weight="400" style="letter-spacing:-0.12px;">10005</text>
<text transform="translate(388.75 204.30) scale(1 1.0)" font-size="7.40" fill="#1f252b" stroke="#1f252b" stroke-width="0.15" font-weight="400" style="">Fixed Asset</text>
<text transform="translate(585.75 204.30) scale(1 1.0)" font-size="7.10" fill="#1f252b" stroke="#1f252b" stroke-width="0.15" font-weight="400" style="letter-spacing:-0.15px;">USD</text>
<text transform="translate(160.40 225.10) scale(1 1.0)" font-size="7.40" fill="#1f252b" stroke="#1f252b" stroke-width="0.15" font-weight="400" style="letter-spacing:0.15px;">Cost of Goods Sold</text>
<text transform="translate(321.30 224.80) scale(1 1.1)" font-size="6.30" fill="#3a4047" stroke="#3a4047" stroke-width="0.06" font-weight="400" style="letter-spacing:-0.12px;">40002</text>
<text transform="translate(388.75 225.10) scale(1 1.0)" font-size="7.40" fill="#1f252b" stroke="#1f252b" stroke-width="0.15" font-weight="400" style="">Cost of Goods Sold</text>
<text transform="translate(585.75 225.10) scale(1 1.0)" font-size="7.10" fill="#1f252b" stroke="#1f252b" stroke-width="0.15" font-weight="400" style="letter-spacing:-0.15px;">USD</text>
<text transform="translate(160.40 245.90) scale(1 1.0)" font-size="7.40" fill="#1f252b" stroke="#1f252b" stroke-width="0.15" font-weight="400" style="letter-spacing:0.15px;">Depreciation Expense</text>
<text transform="translate(321.30 245.60) scale(1 1.1)" font-size="6.30" fill="#3a4047" stroke="#3a4047" stroke-width="0.06" font-weight="400" style="letter-spacing:-0.12px;">40007</text>
<text transform="translate(388.75 245.90) scale(1 1.0)" font-size="7.40" fill="#1f252b" stroke="#1f252b" stroke-width="0.15" font-weight="400" style="">Expense</text>
<text transform="translate(585.75 245.90) scale(1 1.0)" font-size="7.10" fill="#1f252b" stroke="#1f252b" stroke-width="0.15" font-weight="400" style="letter-spacing:-0.15px;">USD</text>
<text transform="translate(160.40 266.70) scale(1 1.0)" font-size="7.40" fill="#1f252b" stroke="#1f252b" stroke-width="0.15" font-weight="400" style="letter-spacing:0.15px;">Drawings</text>
<text transform="translate(321.30 266.40) scale(1 1.1)" font-size="6.30" fill="#3a4047" stroke="#3a4047" stroke-width="0.06" font-weight="400" style="letter-spacing:-0.12px;">30003</text>
<text transform="translate(388.75 266.70) scale(1 1.0)" font-size="7.40" fill="#1f252b" stroke="#1f252b" stroke-width="0.15" font-weight="400" style="">Equity</text>
<text transform="translate(585.75 266.70) scale(1 1.0)" font-size="7.10" fill="#1f252b" stroke="#1f252b" stroke-width="0.15" font-weight="400" style="letter-spacing:-0.15px;">USD</text>
<text transform="translate(778.50 266.70) scale(1 1.0)" font-size="7.40" fill="#1f252b" stroke="#1f252b" stroke-width="0.15" font-weight="400" text-anchor="end" style="letter-spacing:0.05px;">$10,000.00</text>
<text transform="translate(160.40 287.50) scale(1 1.0)" font-size="7.40" fill="#1f252b" stroke="#1f252b" stroke-width="0.15" font-weight="400" style="letter-spacing:0.15px;">Exchange Gain or Loss</text>
<text transform="translate(321.30 287.20) scale(1 1.1)" font-size="6.30" fill="#3a4047" stroke="#3a4047" stroke-width="0.06" font-weight="400" style="letter-spacing:-0.12px;">40005</text>
<text transform="translate(388.75 287.50) scale(1 1.0)" font-size="7.40" fill="#1f252b" stroke="#1f252b" stroke-width="0.15" font-weight="400" style="">Other Expense</text>
<text transform="translate(585.75 287.50) scale(1 1.0)" font-size="7.10" fill="#1f252b" stroke="#1f252b" stroke-width="0.15" font-weight="400" style="letter-spacing:-0.15px;">USD</text>
<text transform="translate(160.40 308.30) scale(1 1.0)" font-size="7.40" fill="#1f252b" stroke="#1f252b" stroke-width="0.15" font-weight="400" style="letter-spacing:0.15px;">Inventory Asset</text>
<text transform="translate(321.30 308.00) scale(1 1.1)" font-size="6.30" fill="#3a4047" stroke="#3a4047" stroke-width="0.06" font-weight="400" style="letter-spacing:-0.12px;">10008</text>
<text transform="translate(388.75 308.30) scale(1 1.0)" font-size="7.40" fill="#1f252b" stroke="#1f252b" stroke-width="0.15" font-weight="400" style="">Inventory</text>
<text transform="translate(585.75 308.30) scale(1 1.0)" font-size="7.10" fill="#1f252b" stroke="#1f252b" stroke-width="0.15" font-weight="400" style="letter-spacing:-0.15px;">USD</text>
<text transform="translate(160.40 329.10) scale(1 1.0)" font-size="7.40" fill="#1f252b" stroke="#1f252b" stroke-width="0.15" font-weight="400" style="letter-spacing:0.15px;">Loan</text>
<text transform="translate(321.30 328.80) scale(1 1.1)" font-size="6.30" fill="#3a4047" stroke="#3a4047" stroke-width="0.06" font-weight="400" style="letter-spacing:-0.12px;">20003</text>
<text transform="translate(388.75 329.10) scale(1 1.0)" font-size="7.40" fill="#1f252b" stroke="#1f252b" stroke-width="0.15" font-weight="400" style="">Other Current Liability</text>
<text transform="translate(585.75 329.10) scale(1 1.0)" font-size="7.10" fill="#1f252b" stroke="#1f252b" stroke-width="0.15" font-weight="400" style="letter-spacing:-0.15px;">USD</text>
<text transform="translate(160.40 349.90) scale(1 1.0)" font-size="7.40" fill="#1f252b" stroke="#1f252b" stroke-width="0.15" font-weight="400" style="letter-spacing:0.15px;">Office Equipment</text>
<text transform="translate(321.30 349.60) scale(1 1.1)" font-size="6.30" fill="#3a4047" stroke="#3a4047" stroke-width="0.06" font-weight="400" style="letter-spacing:-0.12px;">10006</text>
<text transform="translate(388.75 349.90) scale(1 1.0)" font-size="7.40" fill="#1f252b" stroke="#1f252b" stroke-width="0.15" font-weight="400" style="">Fixed Asset</text>
<text transform="translate(585.75 349.90) scale(1 1.0)" font-size="7.10" fill="#1f252b" stroke="#1f252b" stroke-width="0.15" font-weight="400" style="letter-spacing:-0.15px;">USD</text>
<text transform="translate(778.50 349.90) scale(1 1.0)" font-size="7.40" fill="#1f252b" stroke="#1f252b" stroke-width="0.15" font-weight="400" text-anchor="end" style="letter-spacing:0.05px;">$950,000.00</text>
<text transform="translate(160.40 370.70) scale(1 1.0)" font-size="7.40" fill="#1f252b" stroke="#1f252b" stroke-width="0.15" font-weight="400" style="letter-spacing:0.15px;">Office expenses</text>
<text transform="translate(321.30 370.40) scale(1 1.1)" font-size="6.30" fill="#3a4047" stroke="#3a4047" stroke-width="0.06" font-weight="400" style="letter-spacing:-0.12px;">40003</text>
<text transform="translate(388.75 370.70) scale(1 1.0)" font-size="7.40" fill="#1f252b" stroke="#1f252b" stroke-width="0.15" font-weight="400" style="">Expense</text>
<text transform="translate(585.75 370.70) scale(1 1.0)" font-size="7.10" fill="#1f252b" stroke="#1f252b" stroke-width="0.15" font-weight="400" style="letter-spacing:-0.15px;">USD</text>
<text transform="translate(160.40 391.50) scale(1 1.0)" font-size="7.40" fill="#1f252b" stroke="#1f252b" stroke-width="0.15" font-weight="400" style="letter-spacing:0.15px;">Opening Balance Equity</text>
<text transform="translate(321.30 391.20) scale(1 1.1)" font-size="6.30" fill="#3a4047" stroke="#3a4047" stroke-width="0.06" font-weight="400" style="letter-spacing:-0.12px;">30002</text>
<text transform="translate(388.75 391.50) scale(1 1.0)" font-size="7.40" fill="#1f252b" stroke="#1f252b" stroke-width="0.15" font-weight="400" style="">Equity</text>
<text transform="translate(585.75 391.50) scale(1 1.0)" font-size="7.10" fill="#1f252b" stroke="#1f252b" stroke-width="0.15" font-weight="400" style="letter-spacing:-0.15px;">USD</text>
<text transform="translate(778.50 391.50) scale(1 1.0)" font-size="7.40" fill="#1f252b" stroke="#1f252b" stroke-width="0.15" font-weight="400" text-anchor="end" style="letter-spacing:0.05px;">$950,000.00</text>
<text transform="translate(160.40 412.30) scale(1 1.0)" font-size="7.40" fill="#1f252b" stroke="#1f252b" stroke-width="0.15" font-weight="400" style="letter-spacing:0.15px;">Opening Balance Liabilities</text>
<text transform="translate(321.30 412.00) scale(1 1.1)" font-size="6.30" fill="#3a4047" stroke="#3a4047" stroke-width="0.06" font-weight="400" style="letter-spacing:-0.12px;">20004</text>
<text transform="translate(388.75 412.30) scale(1 1.0)" font-size="7.40" fill="#1f252b" stroke="#1f252b" stroke-width="0.15" font-weight="400" style="">Other Current Liability</text>
<text transform="translate(585.75 412.30) scale(1 1.0)" font-size="7.10" fill="#1f252b" stroke="#1f252b" stroke-width="0.15" font-weight="400" style="letter-spacing:-0.15px;">USD</text>
<text transform="translate(778.50 412.30) scale(1 1.0)" font-size="7.40" fill="#1f252b" stroke="#1f252b" stroke-width="0.15" font-weight="400" text-anchor="end" style="letter-spacing:0.05px;">$500,000.00</text>
<text transform="translate(160.40 433.10) scale(1 1.0)" font-size="7.40" fill="#1f252b" stroke="#1f252b" stroke-width="0.15" font-weight="400" style="letter-spacing:0.15px;">Other Expenses</text>
<text transform="translate(321.30 432.80) scale(1 1.1)" font-size="6.30" fill="#3a4047" stroke="#3a4047" stroke-width="0.06" font-weight="400" style="letter-spacing:-0.12px;">40001</text>
<text transform="translate(388.75 433.10) scale(1 1.0)" font-size="7.40" fill="#1f252b" stroke="#1f252b" stroke-width="0.15" font-weight="400" style="">Other Expense</text>
<text transform="translate(585.75 433.10) scale(1 1.0)" font-size="7.10" fill="#1f252b" stroke="#1f252b" stroke-width="0.15" font-weight="400" style="letter-spacing:-0.15px;">USD</text>
</svg>
</body></html>
